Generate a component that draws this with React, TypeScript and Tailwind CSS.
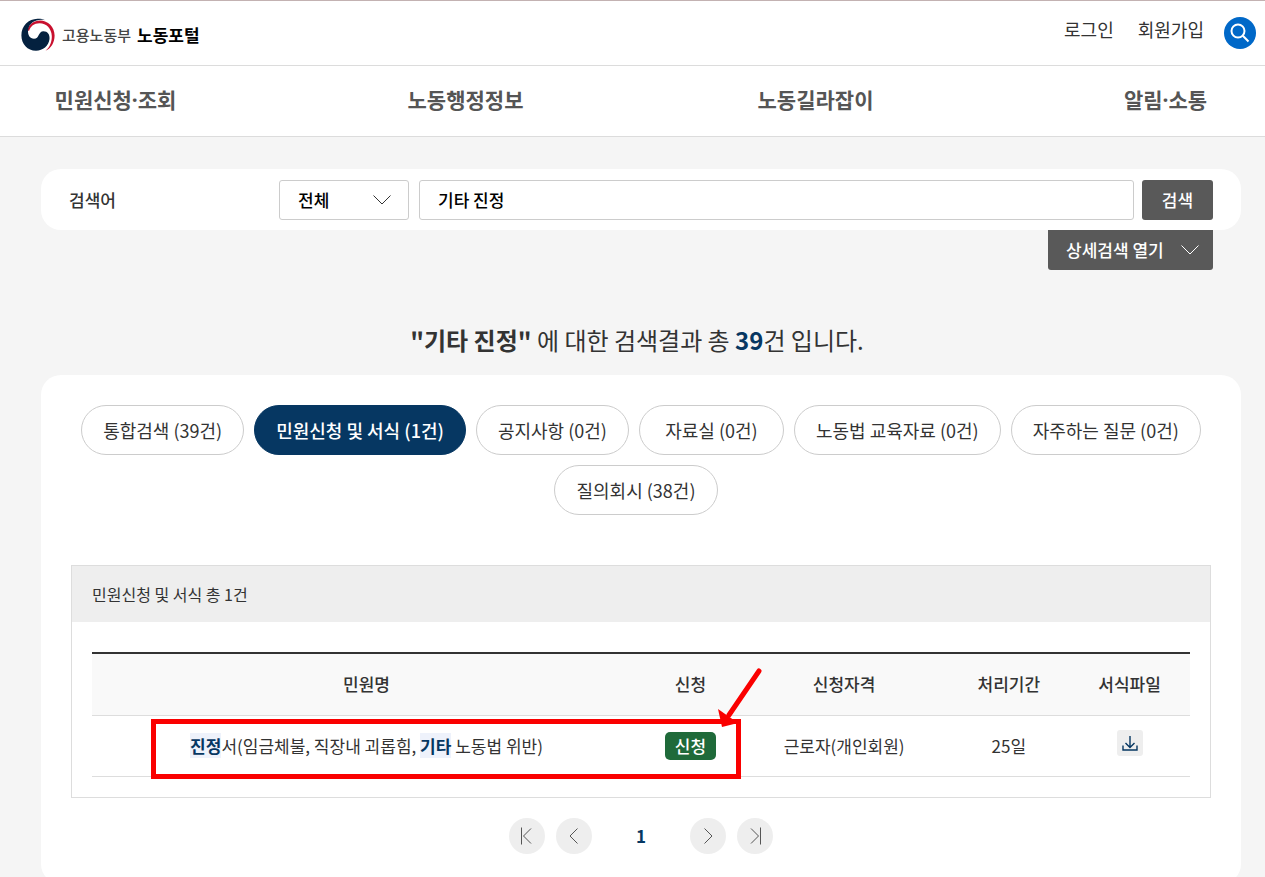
import React from 'react';

const menus = ['민원신청·조회', '노동행정정보', '노동길라잡이', '알림·소통'];

const tabs = [
    { name: '통합검색', count: 39 },
    { name: '민원신청 및 서식', count: 1, active: true },
    { name: '공지사항', count: 0 },
    { name: '자료실', count: 0 },
    { name: '노동법 교육자료', count: 0 },
    { name: '자주하는 질문', count: 0 },
    { name: '질의회시', count: 38 },
];

const columns = [
    { name: '민원명', width: 'w-[50%]' },
    { name: '신청', width: 'w-[9%]' },
    { name: '신청자격', width: 'w-[19%]' },
    { name: '처리기간', width: 'w-[11%]' },
    { name: '서식파일', width: 'w-[11%]' },
];

const Logo = () => (
    <svg viewBox="0 0 34 34" className="w-[34px] h-[34px]" aria-hidden="true">
        <path
            d="M6.500 12C8 6 13 2.500 19 2.500C27 2.500 33.600 9 33.600 17.500C33.600 24.500 30 30.500 24.500 32.800C29 29 31 23.500 30.800 18C30.500 10.500 25.500 5.200 18.500 5.200C13 5.200 9.500 8 8 13Z"
            fill="#c8102e"
        />
        <path
            d="M24 2.200C16 0.500 8.500 4 7.200 11.500C6.300 17 9 20.800 13 20.800C18.500 20.800 17 13.200 22.500 13.200C26.500 13.200 29 16.500 28.500 21C27.700 28 22 32.700 15 32.700C6.500 32.700 0.400 26 0.400 17.500C0.400 8 7.500 1 16.500 0.800C19.500 0.700 22 1.200 24 2.200Z"
            fill="#04213f"
        />
    </svg>
);

const ChevronDown = ({ className }: { className: string }) => (
    <svg viewBox="0 0 18 10" className={className} fill="none" stroke="currentColor" aria-hidden="true">
        <path d="M0.500 0.500L9 9L17.500 0.500" />
    </svg>
);

const PageButton = ({ label, path }: { label: string; path: string }) => (
    <button type="button" aria-label={label} className="flex items-center justify-center w-9 h-9 rounded-full bg-[#eeeeee] text-[#555555]">
        <svg viewBox="0 0 18 18" className="w-[18px] h-[18px]" fill="none" stroke="currentColor">
            <path d={path} />
        </svg>
    </button>
);

const Header = () => (
    <header className="bg-white border-t border-t-[#c3b2b2]">
        <div className="flex items-center justify-between h-[65px] pl-[21px] pr-[9px] border-b border-[#dcdcdc]">
            <a href="#" className="flex items-center pt-1">
                <Logo />
                <span className="ml-[7px] text-[15px] font-medium text-[#444444]">고용노동부</span>
                <span className="ml-1.5 text-[17px] font-bold text-black">노동포털</span>
            </a>
            <div className="flex items-center text-[18px] leading-6">
                <a href="#" className="mb-2">로그인</a>
                <a href="#" className="mb-2 ml-6">회원가입</a>
                <button type="button" aria-label="통합검색" className="flex items-center justify-center w-8 h-8 ml-5 text-white rounded-full bg-[#0068c8]">
                    <svg viewBox="0 0 20 20" className="w-5 h-5" fill="none" stroke="currentColor" strokeWidth="2">
                        <circle cx="8" cy="8" r="6.500" />
                        <path d="M12.800 12.800L18.500 18.500" />
                    </svg>
                </button>
            </div>
        </div>
        <nav className="flex items-center justify-between h-[71px] pl-[53px] pr-[37px] border-b border-[#dcdcdc] font-['Noto_Sans','Noto_Sans_CJK_KR',sans-serif] text-[21px] font-bold text-[#555555]">
            {menus.map((name) => (
                <a key={name} href="#" className="w-[125px] text-center whitespace-nowrap">
                    {name}
                </a>
            ))}
        </nav>
    </header>
);

const SearchForm = () => (
    <form>
        <div className="flex items-center h-[61px] pl-7 pr-7 bg-white rounded-[20px]">
            <label htmlFor="keyword" className="w-[210px] text-[17px] font-medium">
                검색어
            </label>
            <div className="relative w-[130px]">
                <select aria-label="검색구분" className="w-full h-10 pl-[18px] text-[17px] font-medium text-black bg-white border border-[#cccccc] rounded-[3px] appearance-none">
                    <option>전체</option>
                </select>
                <ChevronDown className="absolute w-[18px] h-[10px] right-[18px] top-[15px] text-[#333333] pointer-events-none" />
            </div>
            <input
                id="keyword"
                type="text"
                defaultValue="기타 진정"
                className="h-10 min-w-0 ml-2.5 px-[18px] text-[17px] font-medium text-black border border-[#cccccc] rounded-[3px] grow"
            />
            <button type="button" className="w-[71px] h-10 ml-2 text-[17px] font-medium text-white rounded-[3px] bg-[#595959]">
                검색
            </button>
        </div>
        <div className="flex justify-end pr-7">
            <button type="button" className="flex items-center justify-between w-[165px] h-10 pl-[18px] pr-3.5 text-[17px] font-medium text-white rounded-b-[3px] bg-[#595959]">
                상세검색 열기
                <ChevronDown className="w-[18px] h-[10px]" />
            </button>
        </div>
    </form>
);

const ResultTable = () => (
    <div className="relative">
        <table className="w-full text-center border-t-2 border-t-[#333333] table-fixed text-[17px]">
            <thead>
                <tr className="h-[62px] bg-[#f9f9f9] border-b border-[#dddddd]">
                    {columns.map(({ name, width }) => (
                        <th key={name} scope="col" className={`${width} pb-0.5 font-medium`}>
                            {name}
                        </th>
                    ))}
                </tr>
            </thead>
            <tbody>
                <tr className="h-[61px] border-b border-[#dddddd]">
                    <td>
                        <a href="#">
                            <mark className="font-bold bg-[#eef2fb] text-[#063762]">진정</mark>서(임금체불, 직장내 괴롭힘,{' '}
                            <mark className="font-bold bg-[#eef2fb] text-[#063762]">기타</mark> 노동법 위반)
                        </a>
                    </td>
                    <td>
                        <button type="button" className="h-7 px-2.5 font-medium leading-7 text-white rounded-[5px] bg-[#1f6a3a]">
                            신청
                        </button>
                    </td>
                    <td>근로자(개인회원)</td>
                    <td>25일</td>
                    <td>
                        <button type="button" aria-label="서식파일 내려받기" className="inline-flex items-center justify-center mb-1.5 align-middle rounded-[3px] w-[26px] h-[26px] bg-[#eeeeee] text-[#063762]">
                            <svg viewBox="0 0 16 16" className="w-4 h-4" fill="none" stroke="currentColor" strokeWidth="1.400">
                                <path d="M8 1V12M3.500 8L8 12.500L12.500 8M1 10.500V15H15V10.500" />
                            </svg>
                        </button>
                    </td>
                </tr>
            </tbody>
        </table>

        {/* highlight over the found row */}
        <div className="absolute left-[59px] top-[67px] w-[590px] h-[60px] border-5 border-[#fa0000] pointer-events-none" />
        <svg viewBox="0 0 46 60" className="absolute left-[624px] top-[16px] w-[46px] h-[60px] pointer-events-none" aria-hidden="true">
            <path d="M43 3L13 47" stroke="#fa0000" strokeWidth="5" strokeLinecap="round" />
            <path d="M2 41L6 59L22 55Z" fill="#fa0000" />
        </svg>
    </div>
);

export default function App() {
    return (
        <div className="min-h-screen bg-[#f5f5f5] text-[#333333] font-['Noto_Sans_CJK_KR','Noto_Sans',sans-serif]">
            <Header />

            <main className="pt-8 pb-10 pl-[41px] pr-6">
                <SearchForm />

                <h2 className="mt-[52px] mb-[17px] pr-2 text-2xl leading-9 text-center">
                    <strong className="font-bold">"기타 진정"</strong> 에 대한 검색결과 총 <strong className="font-bold text-[#063762]">39</strong>건 입니다.
                </h2>

                <section className="px-[30px] pt-[30px] pb-[30px] bg-white rounded-[20px]">
                    <ul className="flex flex-wrap justify-center gap-2.5 mb-[50px] text-[18px]">
                        {tabs.map(({ name, count, active }) => (
                            <li key={name} className="last:mr-2.5">
                                <button
                                    type="button"
                                    className={`h-[50px] min-w-[145px] px-[21px] border rounded-full ${
                                        active ? 'font-medium text-white bg-[#063762] border-[#063762]' : 'bg-white border-[#cccccc]'
                                    }`}
                                >
                                    {name} ({count}건)
                                </button>
                            </li>
                        ))}
                    </ul>

                    <div className="border border-[#dddddd]">
                        <h3 className="flex items-center h-14 px-5 text-base bg-[#eeeeee]">민원신청 및 서식 총 1건</h3>
                        <div className="px-5 pt-[30px] pb-5">
                            <ResultTable />
                        </div>
                    </div>

                    <nav aria-label="페이지" className="flex items-center justify-center gap-[11px] mt-5">
                        <PageButton label="처음" path="M3.500 0.500V17.500M13 1.500L5.500 9L13 16.500" />
                        <PageButton label="이전" path="M12.500 1.500L5 9L12.500 16.500" />
                        <a href="#" aria-current="page" className="w-[76px] text-[17px] font-bold text-center text-[#063762]">
                            1
                        </a>
                        <PageButton label="다음" path="M5.500 1.500L13 9L5.500 16.500" />
                        <PageButton label="마지막" path="M14.500 0.500V17.500M5 1.500L12.500 9L5 16.500" />
                    </nav>
                </section>
            </main>
        </div>
    );
}
